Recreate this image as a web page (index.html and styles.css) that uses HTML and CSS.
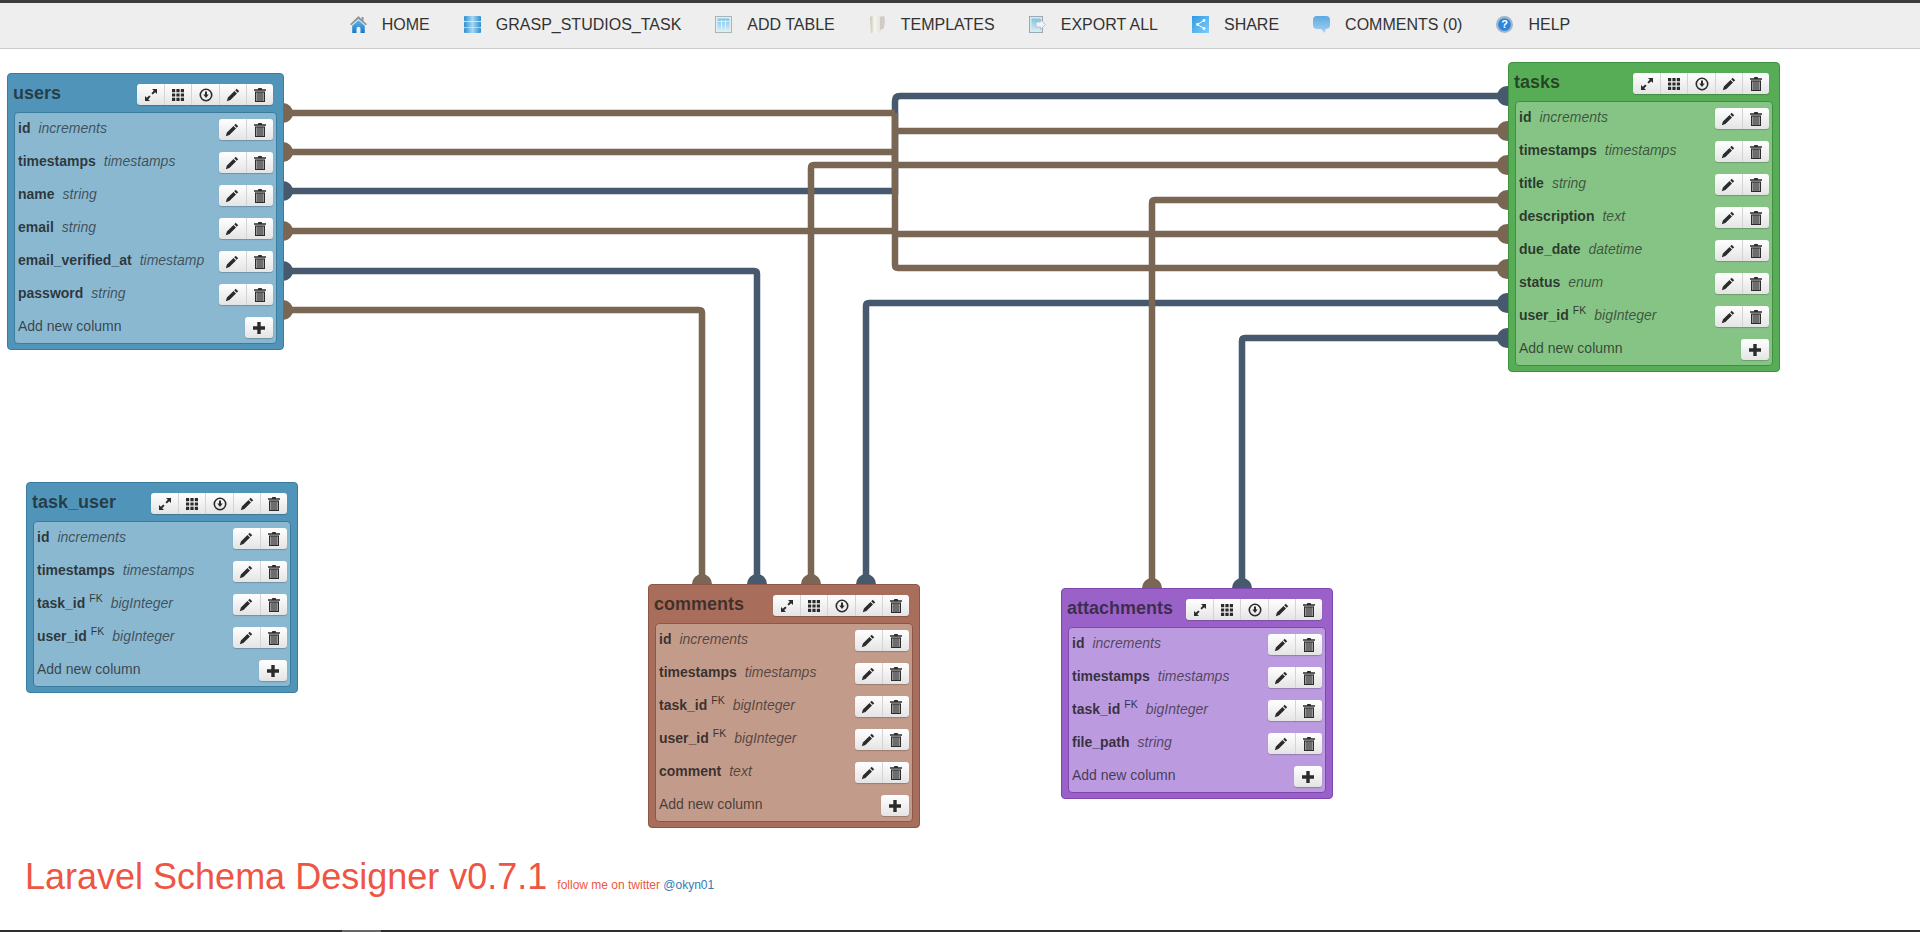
FILE: index.html
```html
<!DOCTYPE html>
<html lang="en">
<head>
  <meta charset="UTF-8">
  <title>Laravel Schema Designer</title>
  <link rel="stylesheet" href="styles.css">
</head>
<body>
  <svg class="defs" width="0" height="0">
    <defs>
      <linearGradient id="g-db"><stop offset="0" stop-color="#2f8ed0"/><stop offset=".5" stop-color="#a5d9f3"/><stop offset="1" stop-color="#2f8ed0"/></linearGradient>
      <linearGradient id="g-home" x2="0" y2="1"><stop offset="0" stop-color="#5db4ee"/><stop offset="1" stop-color="#1b78c6"/></linearGradient>
      <linearGradient id="g-sheet" x2="0" y2="1"><stop offset="0" stop-color="#7cc5e8"/><stop offset="1" stop-color="#cfeaf6"/></linearGradient>
      <linearGradient id="g-page"><stop offset="0" stop-color="#c9c2ae"/><stop offset=".3" stop-color="#f6f5f0"/><stop offset="1" stop-color="#d9d7cf"/></linearGradient>
      <linearGradient id="g-share" x2="1" y2="1"><stop offset="0" stop-color="#2f9be6"/><stop offset="1" stop-color="#7fcdf6"/></linearGradient>
      <linearGradient id="g-bubble" x2="0" y2="1"><stop offset="0" stop-color="#5ca8e2"/><stop offset="1" stop-color="#a8d2f0"/></linearGradient>
    </defs>
    <symbol id="i-expand" viewBox="0 0 14 14"><path d="M8 1h5v5l-1.8-1.8-2.4 2.4-1.400-1.400 2.400-2.400zM6 13H1V8l1.800 1.800 2.400-2.400 1.400 1.400-2.400 2.400z"/></symbol>
    <symbol id="i-grid" viewBox="0 0 14 14"><path d="M1 1h3.200v3.200H1zM5.400 1h3.200v3.200H5.400zM9.800 1H13v3.200H9.800zM1 5.400h3.200v3.200H1zM5.400 5.400h3.200v3.200H5.400zM9.800 5.400H13v3.200H9.800zM1 9.800h3.200V13H1zM5.400 9.800h3.200V13H5.400zM9.800 9.800H13V13H9.800z"/></symbol>
    <symbol id="i-down" viewBox="0 0 14 14"><path fill-rule="evenodd" d="M7 .5a6.500 6.500 0 1 1 0 13 6.500 6.500 0 0 1 0-13zm0 1.600a4.900 4.900 0 1 0 0 9.800 4.900 4.900 0 0 0 0-9.800zM6 3.600h2v3h1.700L7 10 4.300 6.600H6z"/></symbol>
    <symbol id="i-pencil" viewBox="0 0 14 14"><path d="M10.700.8l2.500 2.500-1.500 1.500-2.500-2.500zM8.500 3l2.500 2.500-6.600 6.600L.8 13.200l1.100-3.600z"/></symbol>
    <symbol id="i-trash" viewBox="0 0 14 14"><path d="M5.400 0h3.200l.5 1.300H13v1.400H1V1.300h3.900z"/><path d="M2 3.500h10V14H2z" fill="#9a9a9a"/><path d="M2 3.500h10v1H2zM2 13h10v1H2zM2 3.500h1v10.500H2zM11 3.500h1v10.500h-1zM4.600 4.500h.8V13h-.8zM6.600 4.500h.8V13h-.8zM8.600 4.500h.8V13h-.8z"/></symbol>
    <symbol id="i-plus" viewBox="0 0 14 14"><path d="M5.300 1h3.400v4.300H13v3.400H8.700V13H5.300V8.700H1V5.300h4.300z"/></symbol>
  </svg>

  <nav class="topbar">
    <a class="nav-item">
      <svg class="nav-icon" viewBox="0 0 17 17"><path d="M8.500 0L0 8.200l1.300 1.100L8.500 3l7.200 6.300L17 8.200 13.500 5V1h-2v2.200z" fill="#8e9599"/><path d="M8.500 4.200L2.200 9.800V17h4.300v-4.300a2 2 0 0 1 4 0V17h4.300V9.800z" fill="url(#g-home)"/></svg>
      HOME
    </a>
    <a class="nav-item">
      <svg class="nav-icon" viewBox="0 0 17 17"><rect x="0" y="0" width="17" height="5.300" rx="1" fill="url(#g-db)"/><rect x="0" y="5.900" width="17" height="5.300" rx=".6" fill="url(#g-db)"/><rect x="0" y="11.700" width="17" height="5.300" rx="1" fill="url(#g-db)"/></svg>
      GRASP_STUDIOS_TASK
    </a>
    <a class="nav-item">
      <svg class="nav-icon" viewBox="0 0 17 17"><rect x=".5" y=".5" width="16" height="16" fill="#e6ecee" stroke="#aab5ba"/><rect x="2.500" y="2.500" width="12" height="12" fill="url(#g-sheet)"/><path d="M6.500 4v10.500M10.500 4v10.500M2.500 5.500h12" stroke="#e8f6fc" stroke-width=".8"/></svg>
      ADD TABLE
    </a>
    <a class="nav-item">
      <svg class="nav-icon" viewBox="0 0 17 17"><path d="M1 .5L15 0c1 3 1 8-.5 12.500L12 14l-.5 2L2 17z" fill="url(#g-page)"/><path d="M11 1l4-1c1 3 1 8-.5 12.500L11 14z" fill="#cfcdc3"/></svg>
      TEMPLATES
    </a>
    <a class="nav-item">
      <svg class="nav-icon" viewBox="0 0 17 17"><rect x=".5" y=".5" width="13" height="16" fill="#dde8ed" stroke="#98abb4"/><rect x="2.500" y="2.500" width="9" height="12" fill="url(#g-sheet)"/><path d="M7 6h4.500V3.500L16.500 8.500l-5 5V11H7z" fill="#eef5f8" stroke="#a3b3ba" stroke-width=".7"/></svg>
      EXPORT ALL
    </a>
    <a class="nav-item">
      <svg class="nav-icon" viewBox="0 0 17 17"><rect width="17" height="17" fill="url(#g-share)"/><path d="M12 4.500L5.500 8.500l6.500 4" fill="none" stroke="#fff" stroke-width="1"/><circle cx="12" cy="4.500" r="1.400" fill="#fff"/><circle cx="5.500" cy="8.500" r="1.400" fill="#fff"/><circle cx="12" cy="12.500" r="1.400" fill="#fff"/></svg>
      SHARE
    </a>
    <a class="nav-item">
      <svg class="nav-icon" viewBox="0 0 17 17"><path d="M4 0h9a4 4 0 0 1 4 4v5a4 4 0 0 1-4 4h-.5l-.5 4-4-4H4a4 4 0 0 1-4-4V4a4 4 0 0 1 4-4z" fill="url(#g-bubble)"/></svg>
      COMMENTS (0)
    </a>
    <a class="nav-item">
      <svg class="nav-icon" viewBox="0 0 17 17"><circle cx="8.500" cy="8.500" r="8.500" fill="#a3b6c5"/><circle cx="8.500" cy="8.500" r="6.300" fill="#2b84e0"/><text x="8.500" y="12.300" class="help-mark">?</text></svg>
      HELP
    </a>
  </nav>

  <main class="canvas">
    <svg class="wires" width="1920" height="932">
      <g class="socket-blue">
        <circle cx="283" cy="191" r="10"/><circle cx="283" cy="271" r="10"/>
        <circle cx="1507" cy="96" r="10"/><circle cx="1507" cy="303" r="10"/><circle cx="1507" cy="338" r="10"/>
        <circle cx="757" cy="584" r="10"/><circle cx="866" cy="584" r="10"/><circle cx="1242" cy="588" r="10"/>
      </g>
      <g class="socket-brown">
        <circle cx="283" cy="113" r="10"/><circle cx="283" cy="152" r="10"/><circle cx="283" cy="231" r="10"/><circle cx="283" cy="310" r="10"/>
        <circle cx="1507" cy="131" r="10"/><circle cx="1507" cy="165" r="10"/><circle cx="1507" cy="200" r="10"/><circle cx="1507" cy="234" r="10"/><circle cx="1507" cy="269" r="10"/>
        <circle cx="702" cy="584" r="10"/><circle cx="811" cy="584" r="10"/><circle cx="1152" cy="588" r="10"/>
      </g>
      <g class="wire-blue">
        <path d="M283 191H895V101Q895 96 900 96H1507"/>
        <path d="M283 271H754Q757 271 757 274V584"/>
        <path d="M1507 303H869Q866 303 866 306V584"/>
        <path d="M1507 338H1245Q1242 338 1242 341V588"/>
      </g>
      <g class="wire-brown">
        <path d="M283 113H895"/>
        <path d="M283 152H895"/>
        <path d="M283 231H895"/>
        <path d="M895 113V265Q895 268 898 268H1507"/>
        <path d="M895 131H1507"/>
        <path d="M895 234H1507"/>
        <path d="M1507 165H814Q811 165 811 168V584"/>
        <path d="M1507 200H1155Q1152 200 1152 203V588"/>
        <path d="M283 310H699Q702 310 702 313V584"/>
      </g>
    </svg>

    <section class="tbl tbl-blue pos-users">
      <header class="tbl-head">
        <h3 class="tbl-name">users</h3>
        <div class="btns"><button><svg><use href="#i-expand"/></svg></button><button><svg><use href="#i-grid"/></svg></button><button><svg><use href="#i-down"/></svg></button><button><svg><use href="#i-pencil"/></svg></button><button><svg><use href="#i-trash"/></svg></button></div>
      </header>
      <div class="tbl-body">
        <div class="row"><span class="col"><b>id</b><i>increments</i></span><div class="btns"><button><svg><use href="#i-pencil"/></svg></button><button><svg><use href="#i-trash"/></svg></button></div></div>
        <div class="row"><span class="col"><b>timestamps</b><i>timestamps</i></span><div class="btns"><button><svg><use href="#i-pencil"/></svg></button><button><svg><use href="#i-trash"/></svg></button></div></div>
        <div class="row"><span class="col"><b>name</b><i>string</i></span><div class="btns"><button><svg><use href="#i-pencil"/></svg></button><button><svg><use href="#i-trash"/></svg></button></div></div>
        <div class="row"><span class="col"><b>email</b><i>string</i></span><div class="btns"><button><svg><use href="#i-pencil"/></svg></button><button><svg><use href="#i-trash"/></svg></button></div></div>
        <div class="row"><span class="col"><b>email_verified_at</b><i>timestamp</i></span><div class="btns"><button><svg><use href="#i-pencil"/></svg></button><button><svg><use href="#i-trash"/></svg></button></div></div>
        <div class="row"><span class="col"><b>password</b><i>string</i></span><div class="btns"><button><svg><use href="#i-pencil"/></svg></button><button><svg><use href="#i-trash"/></svg></button></div></div>
        <div class="row"><span class="add">Add new column</span><div class="btns"><button><svg><use href="#i-plus"/></svg></button></div></div>
      </div>
    </section>

    <section class="tbl tbl-blue pos-task-user">
      <header class="tbl-head">
        <h3 class="tbl-name">task_user</h3>
        <div class="btns"><button><svg><use href="#i-expand"/></svg></button><button><svg><use href="#i-grid"/></svg></button><button><svg><use href="#i-down"/></svg></button><button><svg><use href="#i-pencil"/></svg></button><button><svg><use href="#i-trash"/></svg></button></div>
      </header>
      <div class="tbl-body">
        <div class="row"><span class="col"><b>id</b><i>increments</i></span><div class="btns"><button><svg><use href="#i-pencil"/></svg></button><button><svg><use href="#i-trash"/></svg></button></div></div>
        <div class="row"><span class="col"><b>timestamps</b><i>timestamps</i></span><div class="btns"><button><svg><use href="#i-pencil"/></svg></button><button><svg><use href="#i-trash"/></svg></button></div></div>
        <div class="row"><span class="col"><b>task_id</b><sup>FK</sup><i>bigInteger</i></span><div class="btns"><button><svg><use href="#i-pencil"/></svg></button><button><svg><use href="#i-trash"/></svg></button></div></div>
        <div class="row"><span class="col"><b>user_id</b><sup>FK</sup><i>bigInteger</i></span><div class="btns"><button><svg><use href="#i-pencil"/></svg></button><button><svg><use href="#i-trash"/></svg></button></div></div>
        <div class="row"><span class="add">Add new column</span><div class="btns"><button><svg><use href="#i-plus"/></svg></button></div></div>
      </div>
    </section>

    <section class="tbl tbl-brown pos-comments">
      <header class="tbl-head">
        <h3 class="tbl-name">comments</h3>
        <div class="btns"><button><svg><use href="#i-expand"/></svg></button><button><svg><use href="#i-grid"/></svg></button><button><svg><use href="#i-down"/></svg></button><button><svg><use href="#i-pencil"/></svg></button><button><svg><use href="#i-trash"/></svg></button></div>
      </header>
      <div class="tbl-body">
        <div class="row"><span class="col"><b>id</b><i>increments</i></span><div class="btns"><button><svg><use href="#i-pencil"/></svg></button><button><svg><use href="#i-trash"/></svg></button></div></div>
        <div class="row"><span class="col"><b>timestamps</b><i>timestamps</i></span><div class="btns"><button><svg><use href="#i-pencil"/></svg></button><button><svg><use href="#i-trash"/></svg></button></div></div>
        <div class="row"><span class="col"><b>task_id</b><sup>FK</sup><i>bigInteger</i></span><div class="btns"><button><svg><use href="#i-pencil"/></svg></button><button><svg><use href="#i-trash"/></svg></button></div></div>
        <div class="row"><span class="col"><b>user_id</b><sup>FK</sup><i>bigInteger</i></span><div class="btns"><button><svg><use href="#i-pencil"/></svg></button><button><svg><use href="#i-trash"/></svg></button></div></div>
        <div class="row"><span class="col"><b>comment</b><i>text</i></span><div class="btns"><button><svg><use href="#i-pencil"/></svg></button><button><svg><use href="#i-trash"/></svg></button></div></div>
        <div class="row"><span class="add">Add new column</span><div class="btns"><button><svg><use href="#i-plus"/></svg></button></div></div>
      </div>
    </section>

    <section class="tbl tbl-purple pos-attachments">
      <header class="tbl-head">
        <h3 class="tbl-name">attachments</h3>
        <div class="btns"><button><svg><use href="#i-expand"/></svg></button><button><svg><use href="#i-grid"/></svg></button><button><svg><use href="#i-down"/></svg></button><button><svg><use href="#i-pencil"/></svg></button><button><svg><use href="#i-trash"/></svg></button></div>
      </header>
      <div class="tbl-body">
        <div class="row"><span class="col"><b>id</b><i>increments</i></span><div class="btns"><button><svg><use href="#i-pencil"/></svg></button><button><svg><use href="#i-trash"/></svg></button></div></div>
        <div class="row"><span class="col"><b>timestamps</b><i>timestamps</i></span><div class="btns"><button><svg><use href="#i-pencil"/></svg></button><button><svg><use href="#i-trash"/></svg></button></div></div>
        <div class="row"><span class="col"><b>task_id</b><sup>FK</sup><i>bigInteger</i></span><div class="btns"><button><svg><use href="#i-pencil"/></svg></button><button><svg><use href="#i-trash"/></svg></button></div></div>
        <div class="row"><span class="col"><b>file_path</b><i>string</i></span><div class="btns"><button><svg><use href="#i-pencil"/></svg></button><button><svg><use href="#i-trash"/></svg></button></div></div>
        <div class="row"><span class="add">Add new column</span><div class="btns"><button><svg><use href="#i-plus"/></svg></button></div></div>
      </div>
    </section>

    <section class="tbl tbl-green pos-tasks">
      <header class="tbl-head">
        <h3 class="tbl-name">tasks</h3>
        <div class="btns"><button><svg><use href="#i-expand"/></svg></button><button><svg><use href="#i-grid"/></svg></button><button><svg><use href="#i-down"/></svg></button><button><svg><use href="#i-pencil"/></svg></button><button><svg><use href="#i-trash"/></svg></button></div>
      </header>
      <div class="tbl-body">
        <div class="row"><span class="col"><b>id</b><i>increments</i></span><div class="btns"><button><svg><use href="#i-pencil"/></svg></button><button><svg><use href="#i-trash"/></svg></button></div></div>
        <div class="row"><span class="col"><b>timestamps</b><i>timestamps</i></span><div class="btns"><button><svg><use href="#i-pencil"/></svg></button><button><svg><use href="#i-trash"/></svg></button></div></div>
        <div class="row"><span class="col"><b>title</b><i>string</i></span><div class="btns"><button><svg><use href="#i-pencil"/></svg></button><button><svg><use href="#i-trash"/></svg></button></div></div>
        <div class="row"><span class="col"><b>description</b><i>text</i></span><div class="btns"><button><svg><use href="#i-pencil"/></svg></button><button><svg><use href="#i-trash"/></svg></button></div></div>
        <div class="row"><span class="col"><b>due_date</b><i>datetime</i></span><div class="btns"><button><svg><use href="#i-pencil"/></svg></button><button><svg><use href="#i-trash"/></svg></button></div></div>
        <div class="row"><span class="col"><b>status</b><i>enum</i></span><div class="btns"><button><svg><use href="#i-pencil"/></svg></button><button><svg><use href="#i-trash"/></svg></button></div></div>
        <div class="row"><span class="col"><b>user_id</b><sup>FK</sup><i>bigInteger</i></span><div class="btns"><button><svg><use href="#i-pencil"/></svg></button><button><svg><use href="#i-trash"/></svg></button></div></div>
        <div class="row"><span class="add">Add new column</span><div class="btns"><button><svg><use href="#i-plus"/></svg></button></div></div>
      </div>
    </section>

    <h1 class="brand">Laravel Schema Designer v0.7.1 <small>follow me on twitter <a>@okyn01</a></small></h1>
  </main>

  <div class="bottom-edge"><span></span></div>
</body>
</html>
```

FILE: styles.css
```css
html, body {
  margin: 0;
  height: 932px;
  overflow: hidden;
}

body {
  font-family: "Liberation Sans", Arial, sans-serif;
  font-size: 14px;
  color: #333;
  background: #fff;
  display: flex;
  flex-direction: column;
}

.defs {
  position: absolute;
}

/* top menu */
.topbar {
  height: 43px;
  padding-bottom: 2px;
  border-top: 3px solid #3c3c3c;
  border-bottom: 1px solid #ccc;
  background: #eee;
  display: flex;
  justify-content: center;
  align-items: center;
  gap: 34px;
  flex: none;
}

.nav-item {
  display: flex;
  align-items: center;
  gap: 15px;
  font-size: 16px;
  color: #333;
}

.nav-icon {
  width: 17px;
  height: 17px;
  flex: none;
}

.help-mark {
  font-size: 11px;
  font-weight: bold;
  fill: #fff;
  text-anchor: middle;
}

/* diagram */
.canvas {
  position: relative;
  flex: 1;
}

.wires {
  position: absolute;
  left: 0;
  top: -49px;
}

.wire-blue, .wire-brown {
  fill: none;
  stroke-width: 6.5;
}

.wire-blue { stroke: #46596e; }
.wire-brown { stroke: #796653; }
.socket-blue { fill: #46596e; }
.socket-brown { fill: #796653; }

.tbl {
  position: absolute;
  box-sizing: border-box;
  width: 272px;
  padding: 0 6px 5px;
  border: 1px solid;
  border-radius: 4px;
}

.pos-users { left: 7px; top: 24px; width: 277px; }
.pos-task-user { left: 26px; top: 433px; }
.pos-comments { left: 648px; top: 535px; }
.pos-attachments { left: 1061px; top: 539px; }
.pos-tasks { left: 1508px; top: 13px; }

.tbl-blue { background: #5095b9; border-color: #3a7c9e; }
.tbl-blue .tbl-body { background: #8ab8d1; border-color: #3a7c9e; }
.tbl-green { background: #56ad56; border-color: #3f8f3f; }
.tbl-green .tbl-body { background: #86c486; border-color: #3f8f3f; }
.tbl-brown { background: #a96d5b; border-color: #8d5646; }
.tbl-brown .tbl-body { background: #c39b8b; border-color: #8d5646; }
.tbl-purple { background: #9a62c9; border-color: #7f47ad; }
.tbl-purple .tbl-body { background: #bb9adf; border-color: #7f47ad; }

.tbl-head {
  height: 38px;
  display: flex;
  justify-content: space-between;
  align-items: flex-start;
  padding-right: 4px;
}

.tbl-name {
  margin: 9px 0 0 -1px;
  font-size: 18px;
  line-height: 20px;
  font-weight: bold;
  color: rgba(20, 20, 20, 0.7);
}

.tbl-body {
  border: 1px solid;
  border-radius: 4px;
  padding: 6px 3px 5px 3px;
}

.row {
  height: 33px;
  display: flex;
  justify-content: space-between;
  align-items: flex-start;
}

.row:last-child {
  height: 21px;
}

.col, .add {
  font-size: 14px;
  line-height: 18px;
  color: rgba(20, 20, 20, 0.8);
}

.add {
  color: rgba(20, 20, 20, 0.72);
}

.col b {
  font-weight: bold;
}

.col sup {
  font-size: 10.5px;
  line-height: 0;
  margin-left: 4px;
}

.col i {
  margin-left: 8px;
  color: rgba(20, 20, 20, 0.65);
}

.btns {
  display: flex;
  margin-top: 10px;
  border-radius: 3px;
  box-shadow: 0 1px 1px rgba(0, 0, 0, 0.2);
}

.tbl-body .btns {
  margin-top: 0;
}

.btns button {
  width: 27.2px;
  height: 21px;
  padding: 0;
  border: 0;
  border-left: 1px solid #d4d4d4;
  background: linear-gradient(#fff, #e4e4e4);
  display: flex;
  align-items: center;
  justify-content: center;
}

.btns button:first-child {
  border-left: 0;
  border-radius: 3px 0 0 3px;
}

.btns button:last-child {
  border-radius: 0 3px 3px 0;
}

.btns button:only-child {
  border-radius: 3px;
  width: 28px;
}

.btns svg {
  width: 14px;
  height: 14px;
  fill: #2b2b2b;
}

/* footer title */
.brand {
  position: absolute;
  left: 25px;
  top: 808px;
  margin: 0;
  font-size: 36px;
  line-height: 40px;
  font-weight: normal;
  color: #ee5544;
}

.brand small {
  font-size: 12px;
}

.brand a {
  color: #337ab7;
}

.bottom-edge {
  position: absolute;
  left: 0;
  right: 0;
  top: 930px;
  height: 2px;
  background: #2e2e2e;
}

.bottom-edge span {
  display: block;
  width: 39px;
  height: 2px;
  margin-left: 342px;
  background: #666;
}
```
